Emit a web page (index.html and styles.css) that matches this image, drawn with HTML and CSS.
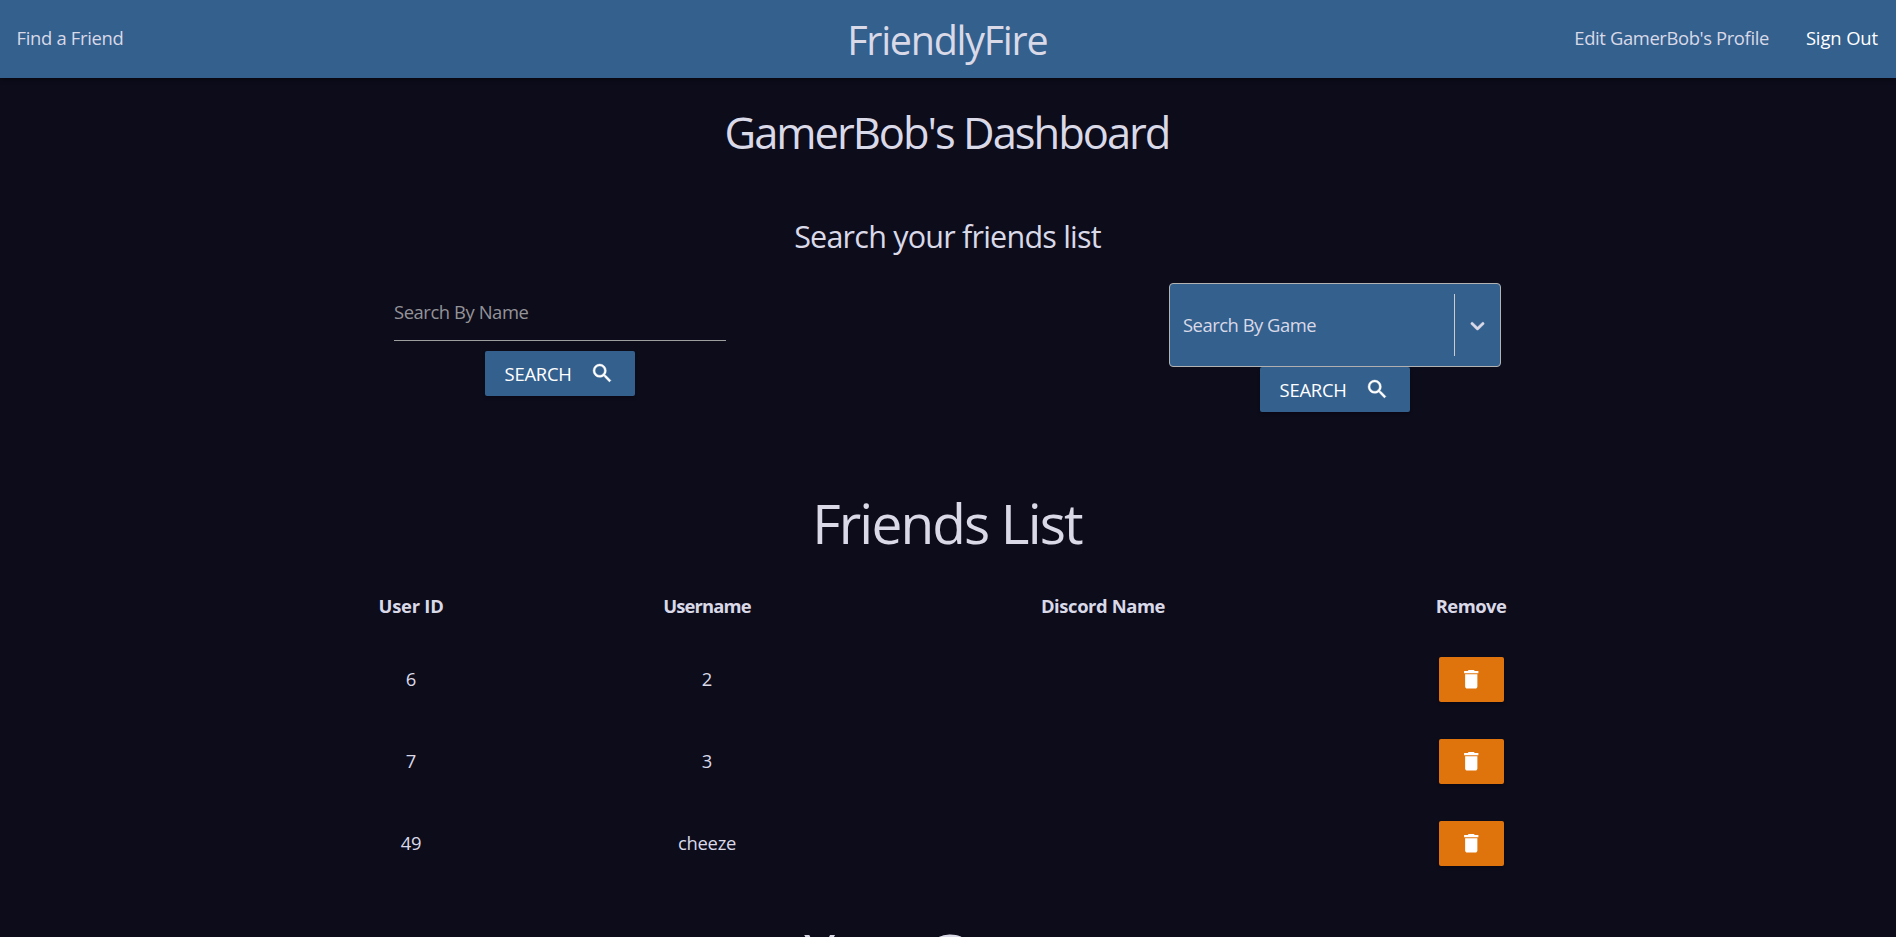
FILE: index.html
```
<!DOCTYPE html>
<html lang="en">
<head>
<meta charset="utf-8">
<title>FriendlyFire</title>
<link rel="stylesheet" href="styles.css">
</head>
<body>
<svg class="sprite" aria-hidden="true">
  <symbol id="search" viewBox="0 0 24 24"><path d="M15.5 14h-.79l-.28-.27A6.471 6.471 0 0 0 16 9.5 6.5 6.5 0 1 0 9.5 16c1.61 0 3.09-.59 4.23-1.57l.27.28v.79l5 4.99L20.49 19l-4.99-5zm-6 0C7.01 14 5 11.99 5 9.5S7.01 5 9.5 5 14 7.01 14 9.5 11.99 14 9.5 14z"/></symbol>
  <symbol id="trash" viewBox="0 0 24 24"><path d="M6 19c0 1.1.9 2 2 2h8c1.1 0 2-.9 2-2V7H6v12zM19 4h-3.500l-1-1h-5l-1 1H5v2h14V4z"/></symbol>
</svg>
<nav class="nav">
  <a class="nav-find">Find a Friend</a>
  <a class="brand">FriendlyFire</a>
  <div class="nav-right">
    <a class="nav-edit">Edit GamerBob's Profile</a>
    <a class="nav-out">Sign Out</a>
  </div>
</nav>
<main>
  <h1 class="dashboard">GamerBob's Dashboard</h1>
  <h2 class="subtitle">Search your friends list</h2>
  <section class="filters">
    <form class="filter">
      <input class="name-input" type="text" placeholder="Search By Name">
      <button class="btn" type="button"><span>SEARCH</span><svg class="icon bold"><use href="#search"/></svg></button>
    </form>
    <form class="filter">
      <div class="select">
        <span class="select-label">Search By Game</span>
        <span class="select-sep"></span>
        <svg class="chevron" viewBox="0 0 20 20"><path d="M4.516 7.548c0.436-0.446 1.043-0.481 1.576 0l3.908 3.747 3.908-3.747c0.533-0.481 1.141-0.446 1.574 0 0.436 0.445 0.408 1.197 0 1.615-0.406 0.418-4.695 4.502-4.695 4.502-0.217 0.223-0.502 0.335-0.787 0.335s-0.570-0.112-0.789-0.335c0 0-4.287-4.084-4.695-4.502s-0.436-1.170 0-1.615z"/></svg>
      </div>
      <button class="btn" type="button"><span>SEARCH</span><svg class="icon bold"><use href="#search"/></svg></button>
    </form>
  </section>
  <h2 class="section-title">Friends List</h2>
  <table class="friends">
    <colgroup><col class="c-id"><col class="c-user"><col class="c-discord"><col class="c-remove"></colgroup>
    <thead>
      <tr><th class="h-id">User ID</th><th class="h-user">Username</th><th class="h-discord">Discord Name</th><th class="h-remove">Remove</th></tr>
    </thead>
    <tbody>
      <tr><td>6</td><td>2</td><td></td><td><button class="btn remove" type="button" aria-label="Remove"><svg class="icon"><use href="#trash"/></svg></button></td></tr>
      <tr><td>7</td><td>3</td><td></td><td><button class="btn remove" type="button" aria-label="Remove"><svg class="icon"><use href="#trash"/></svg></button></td></tr>
      <tr><td>49</td><td>cheeze</td><td></td><td><button class="btn remove" type="button" aria-label="Remove"><svg class="icon"><use href="#trash"/></svg></button></td></tr>
    </tbody>
  </table>
  <h2 class="section-title games">Your Games</h2>
</main>
</body>
</html>
```
FILE: styles.css
```
* { box-sizing: border-box; }
html, body { height: 100%; }
body {
  margin: 0;
  overflow: hidden;
  background: #0d0c1b;
  color: #d9d9e8;
  font: 18.4px/28px "Open Sans", "Noto Sans", sans-serif;
  letter-spacing: -.25px;
}
h1, h2 { margin: 0; font-weight: 400; text-align: center; }
.sprite { display: none; }

.nav {
  display: grid;
  grid-template-columns: 1fr auto 1fr;
  height: 78px;
  padding: 0 18px 0 16.5px;
  line-height: 76px;
  background: #34608d;
  box-shadow: 0 2px 4px rgba(0, 0, 0, .4);
}
.nav-find { letter-spacing: -.3px; }
.brand { font-size: 39.5px; letter-spacing: -1.28px; line-height: 80px; }
.nav-right { display: flex; justify-content: flex-end; gap: 37px; }
.nav-edit { letter-spacing: -.37px; }
.nav-out { letter-spacing: -.1px; color: #fff; }

.dashboard { margin-top: 25px; padding-right: 2px; font-size: 43.5px; line-height: 60px; letter-spacing: -2.02px; }
.subtitle { margin-top: 53px; padding-right: 1px; font-size: 30.5px; line-height: 40px; letter-spacing: -.78px; }

.filters { display: flex; justify-content: space-between; width: 1108px; height: 181px; margin: 27px auto 0; }
.filter { display: flex; flex-direction: column; align-items: center; width: 332px; }
.filter:last-child { margin-right: 1px; }
.name-input {
  width: 100%;
  height: 58px;
  margin-bottom: 10px;
  padding: 0;
  border: 0;
  border-bottom: 1px solid #9e9e9e;
  background: none;
  font: inherit;
  letter-spacing: -.42px;
}
.name-input::placeholder { color: #949398; opacity: 1; }
.btn {
  display: flex;
  align-items: center;
  justify-content: space-between;
  width: 150px;
  height: 45px;
  padding: 0 21px 1px 19.5px;
  border: 0;
  border-radius: 2px;
  background: #34608d;
  color: #fff;
  font: inherit;
  letter-spacing: -.2px;
  box-shadow: 0 2px 3px rgba(0, 0, 0, .3);
}
.btn span { padding-top: 1px; }
.icon { width: 24.5px; height: 24.5px; fill: currentColor; }
.bold { stroke: currentColor; stroke-width: .4px; }
.select {
  display: flex;
  align-items: center;
  width: 100%;
  height: 84px;
  padding: 0 11px 0 13px;
  border: 1px solid #b3b3b3;
  border-radius: 4px;
  background: #34608d;
  flex: none;
}
.select-label { flex: 1; letter-spacing: -.48px; }
.select-sep { width: 1px; height: 62px; margin-right: 11px; background: #ccc; }
.chevron { width: 23px; height: 23px; fill: #d9d9e8; stroke: #d9d9e8; stroke-width: .4px; }

.section-title { margin-top: 29px; padding-right: 2px; font-size: 55px; line-height: 60px; letter-spacing: -1.87px; }
.friends { width: 1328px; margin: 21px auto 0; border-collapse: collapse; table-layout: fixed; }
.c-id { width: 254px; }
.c-user { width: 338px; }
.c-discord { width: 454px; }
.c-remove { width: 282px; }
th, td { padding: 0; text-align: center; vertical-align: middle; }
th { height: 64px; }
td { height: 82px; }
.h-id { letter-spacing: -.24px; }
.h-user { letter-spacing: -.84px; }
.h-discord { letter-spacing: -.4px; }
.h-remove { letter-spacing: -.54px; }
.remove { justify-content: center; width: 65px; margin: 0 auto; padding: 0; background: #df740c; }
.games { margin-top: 39px; padding-right: 0; letter-spacing: -2.55px; }
```
